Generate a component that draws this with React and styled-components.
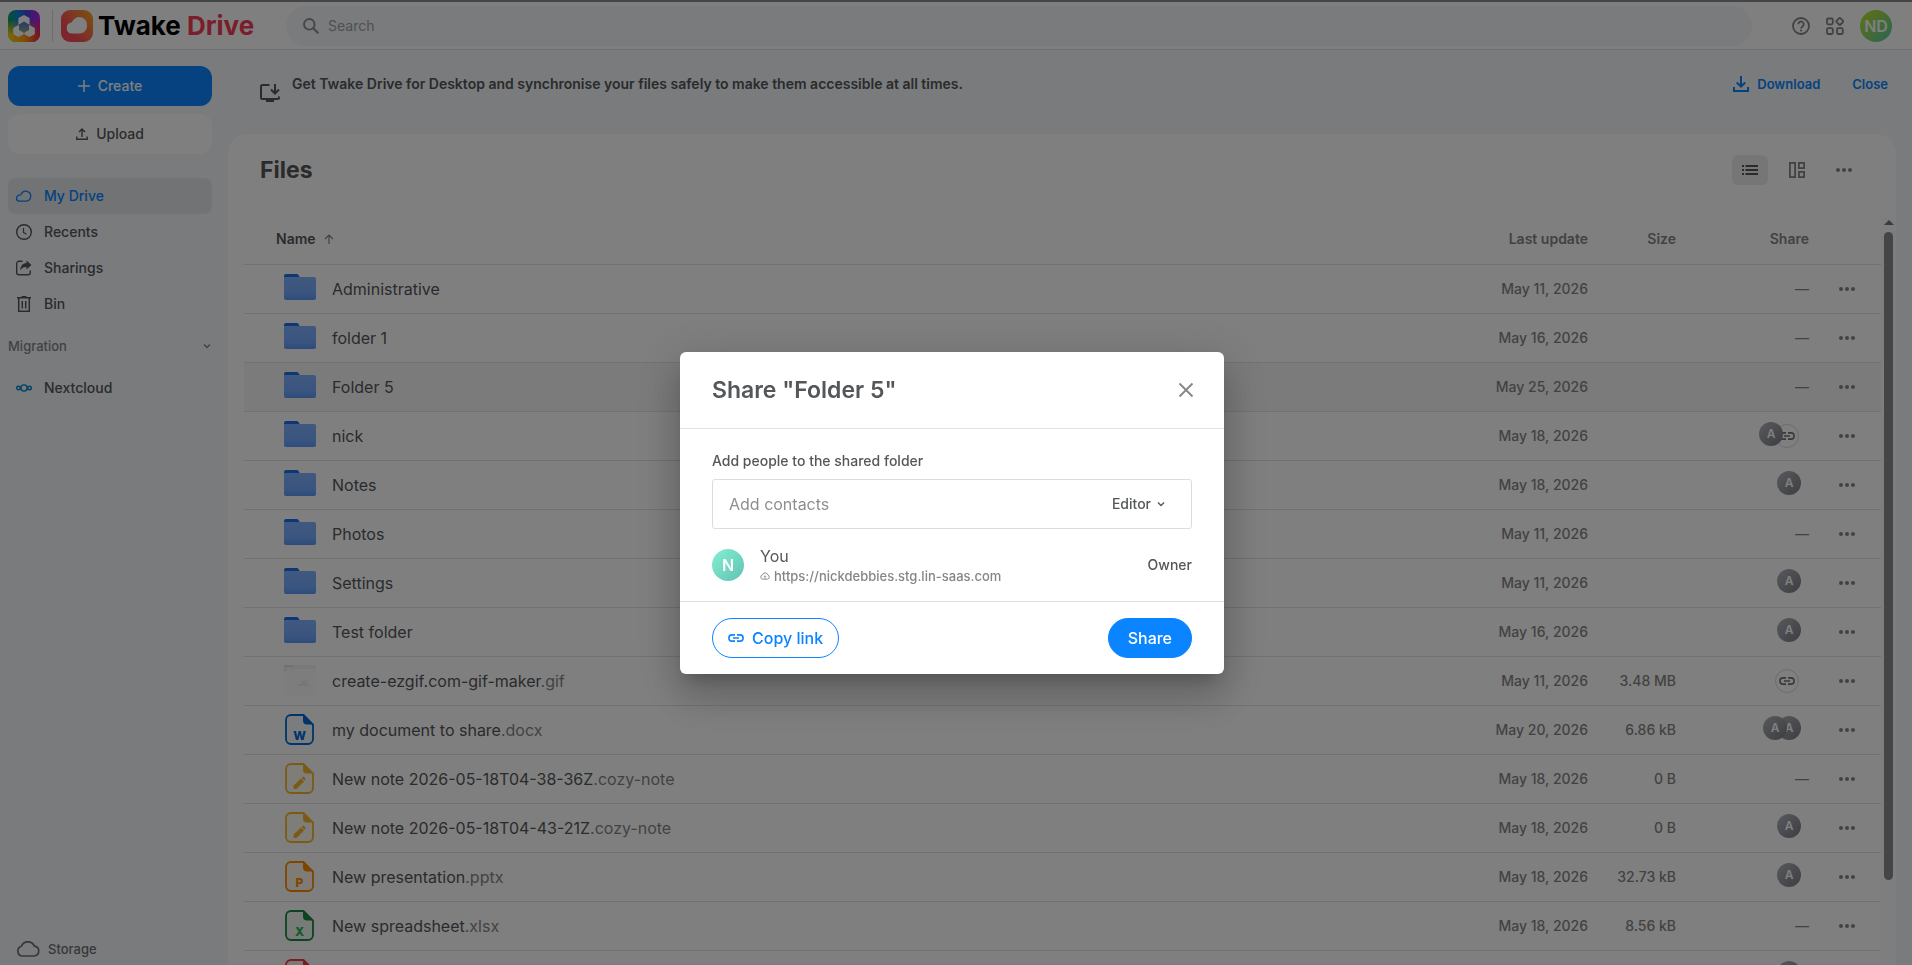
import { useState } from "react";
import styled, { createGlobalStyle, css } from "styled-components";

const COLOR = {
  text: "#545759",
  textSecondary: "#858585",
  primary: "#0a84ff",
  paper: "#ffffff",
  contrast: "#f3f6f9",
  divider: "#e3e3e3",
};

const GlobalStyle = createGlobalStyle`
  *, *::before, *::after {
    box-sizing: border-box;
  }

  html, body, #root {
    height: 100%;
    margin: 0;
  }

  body {
    overflow: hidden;
    background: ${COLOR.contrast};
    color: ${COLOR.text};
    font-family: Inter, "Liberation Sans", sans-serif;
    font-size: 14px;
    line-height: 20px;
  }

  button, input, select {
    font: inherit;
    color: inherit;
  }

  button {
    border: 0;
    padding: 0;
    background: none;
    cursor: pointer;
  }

  a {
    color: inherit;
    text-decoration: none;
  }

  h1, h2, p, ul {
    margin: 0;
    padding: 0;
  }

  svg {
    display: block;
    flex: none;
  }
`;

/* ---------- layout ---------- */

const Page = styled.div`
  display: flex;
  flex-direction: column;
  height: 100vh;
  border-top: 2px solid #8a8a8a;
`;

const TopBar = styled.header`
  display: flex;
  align-items: center;
  flex: none;
  height: 48px;
  padding: 0 20px 0 8px;
  background: ${COLOR.paper};
  border-bottom: 1px solid #dfe3e8;
`;

const Brand = styled.a`
  display: flex;
  align-items: center;
  width: 278px;
  font-size: 26px;
  font-weight: 700;
  line-height: 32px;
  color: #000;
`;

const BrandDivider = styled.span`
  width: 1px;
  height: 32px;
  margin: 0 8px 0 12px;
  background: #d8dbde;
`;

const BrandName = styled.span`
  margin-left: 5px;
  white-space: nowrap;

  span {
    color: #f23c54;
  }
`;

const SearchBox = styled.label`
  display: flex;
  align-items: center;
  flex: 1;
  gap: 8px;
  height: 40px;
  padding: 0 16px;
  border-radius: 20px;
  background: ${COLOR.contrast};
  color: #8d8f91;

  input {
    flex: 1;
    border: 0;
    padding: 0;
    outline: 0;
    background: none;
  }

  input::placeholder {
    color: #9fa1a3;
    opacity: 1;
  }
`;

const TopActions = styled.div`
  display: flex;
  align-items: center;
  gap: 12px;
  margin-left: 38px;
  color: ${COLOR.textSecondary};

  > :last-child {
    margin-left: 2px;
  }
`;

const IconButton = styled.button`
  display: grid;
  place-items: center;
  width: ${({ $width }) => $width || 22}px;
  height: 30px;
  border-radius: 6px;
  color: ${({ $active }) => ($active ? COLOR.text : COLOR.textSecondary)};
  background: ${({ $active }) => ($active ? "#ededed" : "none")};
`;

const Avatar = styled.span`
  display: grid;
  place-items: center;
  flex: none;
  width: ${({ $size }) => $size || 32}px;
  height: ${({ $size }) => $size || 32}px;
  border-radius: 50%;
  background: ${({ $fill }) => $fill};
  color: #fff;
  font-size: ${({ $size }) => ($size === 24 ? 12 : 16)}px;
  font-weight: 600;
`;

const Body = styled.div`
  display: flex;
  flex: 1;
  min-height: 0;
`;

/* ---------- sidebar ---------- */

const Sidebar = styled.aside`
  display: flex;
  flex-direction: column;
  flex: none;
  width: 228px;
  padding: 16px 16px 4px 8px;
`;

const SideButton = styled.button`
  display: flex;
  align-items: center;
  justify-content: center;
  gap: 8px;
  height: 40px;
  margin-bottom: 8px;
  border-radius: 12px;
  font-weight: 500;
  background: ${COLOR.paper};

  ${({ $primary }) =>
    $primary &&
    css`
      background: ${COLOR.primary};
      color: #fff;
    `}
`;

const NavList = styled.ul`
  list-style: none;
  margin-top: 16px;
`;

const NavLink = styled.a`
  display: flex;
  align-items: center;
  gap: 12px;
  height: 36px;
  padding: 0 8px;
  border-radius: 8px;
  font-weight: 500;

  ${({ $active }) =>
    $active &&
    css`
      background: #e4e7ea;
      color: ${COLOR.primary};
    `}
`;

const NavGroup = styled.button`
  display: flex;
  align-items: center;
  justify-content: space-between;
  height: 36px;
  padding-right: 1px;
  margin: 6px 0;
  font-size: 13px;
  font-weight: 500;
  color: ${COLOR.textSecondary};
`;

const Storage = styled.a`
  display: flex;
  align-items: center;
  gap: 8px;
  margin-top: auto;
  padding: 0 8px;
  font-size: 13px;
  font-weight: 500;
  line-height: 24px;
  color: #6f7174;
`;

/* ---------- main ---------- */

const Main = styled.main`
  display: flex;
  flex-direction: column;
  flex: 1;
  min-width: 0;
  padding-right: 16px;
`;

const Banner = styled.section`
  display: flex;
  align-items: flex-start;
  flex: none;
  height: 84px;
  padding: 24px 8px 0 32px;

  > svg {
    margin: 10px 12px 0 0;
  }

  p {
    flex: 1;
    font-weight: 600;
  }
`;

const BannerLink = styled.button`
  display: flex;
  align-items: center;
  gap: 8px;
  margin-left: 32px;
  font-size: 13px;
  font-weight: 600;
  line-height: 20px;
  color: ${COLOR.primary};
`;

const Card = styled.section`
  display: flex;
  flex-direction: column;
  flex: 1;
  min-height: 0;
  padding-left: 16px;
  border-radius: 20px 20px 0 0;
  background: ${COLOR.paper};
`;

const CardHeader = styled.div`
  display: flex;
  align-items: center;
  flex: none;
  height: 72px;
  margin-bottom: 9px;
  padding: 0 34px 0 16px;

  h1 {
    flex: 1;
    font-size: 23px;
    line-height: 32px;
  }
`;

const Toolbar = styled.div`
  display: flex;
  align-items: center;
  gap: 11px;
`;

const Scroller = styled.div`
  display: flex;
  flex: 1;
  min-height: 0;
  overflow: hidden;
`;

const Track = styled.div`
  display: flex;
  flex-direction: column;
  align-items: center;
  flex: none;
  width: 15px;
  padding-top: 5px;
  gap: 7px;
  background: #fcfcfc;
`;

const Thumb = styled.div`
  width: 9px;
  height: 87%;
  border-radius: 5px;
  background: #8b8b8b;
`;

const FileTable = styled.table`
  flex: 1;
  align-self: flex-start;
  border-collapse: collapse;
  table-layout: fixed;

  th, td {
    height: 49px;
    padding: 0;
    border-bottom: 1px solid ${COLOR.divider};
    font-weight: 500;
    text-align: right;
    color: ${COLOR.textSecondary};
  }

  th {
    font-weight: 600;
  }

  th:first-child {
    padding-left: 32px;
    text-align: left;
    color: ${COLOR.text};
  }

  td:first-child {
    padding-left: 40px;
    text-align: left;
  }
`;

const Col = styled.col`
  width: ${({ $width }) => ($width ? `${$width}px` : "auto")};
`;

const FileRow = styled.tr`
  background: ${({ $selected }) => ($selected ? "#f7f7f7" : "none")};
`;

const SortButton = styled.button`
  display: flex;
  align-items: center;
  gap: 8px;
  font-weight: 600;

  svg {
    color: ${COLOR.textSecondary};
  }
`;

const FileName = styled.div`
  display: flex;
  align-items: center;
  gap: 16px;
  font-size: 16px;
  font-weight: 400;
  line-height: 24px;
  color: ${COLOR.text};

  span span {
    color: ${COLOR.textSecondary};
  }
`;

const Shared = styled.div`
  display: flex;
  justify-content: flex-end;
  padding: 0 8px 3px 0;
`;

const Bubble = styled(Avatar)`
  position: relative;
  z-index: ${({ $overlap }) => ($overlap ? 1 : 0)};
  margin-right: -${({ $overlap }) => $overlap}px;
`;

const LinkBubble = styled.span`
  display: grid;
  place-items: center;
  width: 24px;
  height: 24px;
  margin: 2px 2px -2px 0;
  border: 1px solid #d6d8da;
  border-radius: 50%;
  background: ${COLOR.paper};
  color: #717375;
`;

const MoreButton = styled(IconButton)`
  margin-left: auto;
  margin-right: 23px;
`;

/* ---------- share dialog ---------- */

const Backdrop = styled.div`
  position: fixed;
  inset: 0;
  z-index: 10;
  display: grid;
  place-items: center;
  padding: 60px 8px 0 0;
  background: rgba(0, 0, 0, 0.5);
`;

const Dialog = styled.section`
  width: 544px;
  border-radius: 6px;
  background: ${COLOR.paper};
  box-shadow: 0 11px 15px -7px rgba(0, 0, 0, 0.2),
    0 24px 38px 3px rgba(0, 0, 0, 0.14), 0 9px 46px 8px rgba(0, 0, 0, 0.12);
`;

const DialogHeader = styled.header`
  display: flex;
  justify-content: space-between;
  align-items: center;
  height: 77px;
  padding: 0 26px 0 32px;
  border-bottom: 1px solid #e2e2e2;

  h2 {
    font-size: 23px;
    font-weight: 600;
    line-height: 32px;
  }
`;

const DialogBody = styled.div`
  padding: 22px 32px 16px;
`;

const FieldLabel = styled.label`
  display: block;
  margin-bottom: 8px;
  font-weight: 500;
`;

const Field = styled.div`
  display: flex;
  align-items: center;
  height: 50px;
  padding: 0 26px 0 16px;
  border: 1px solid #dcdcdc;
  border-radius: 3px;

  input {
    flex: 1;
    min-width: 0;
    padding: 0;
    border: 0;
    outline: 0;
    font-size: 16px;
    line-height: 24px;
  }

  input::placeholder {
    color: #8f8f8f;
    opacity: 1;
  }

  select {
    padding: 0 6px 0 0;
    border: 0;
    outline: 0;
    appearance: none;
    field-sizing: content;
    background: none;
    font-weight: 500;
  }
`;

const Member = styled.div`
  display: flex;
  align-items: center;
  gap: 16px;
  margin-top: 16px;
  font-weight: 500;
`;

const MemberName = styled.div`
  flex: 1;
  font-size: 16px;
  font-weight: 400;
  line-height: 22px;
`;

const MemberLink = styled.span`
  display: flex;
  align-items: center;
  gap: 4px;
  font-size: 13px;
  font-weight: 500;
  line-height: 18px;
  color: ${COLOR.textSecondary};
`;

const DialogActions = styled.footer`
  display: flex;
  justify-content: space-between;
  padding: 16px 32px;
  border-top: 1px solid #e2e2e2;
`;

const PillButton = styled.button`
  display: flex;
  align-items: center;
  gap: 8px;
  height: 40px;
  padding: 0 ${({ $filled }) => ($filled ? 19 : 15)}px;
  border: 1px solid ${COLOR.primary};
  border-radius: 20px;
  background: ${({ $filled }) => ($filled ? COLOR.primary : COLOR.paper)};
  color: ${({ $filled }) => ($filled ? "#fff" : COLOR.primary)};
  font-size: 16px;
  font-weight: 500;
`;

/* ---------- icons ---------- */

function Icon({ size = 16, height, box = "0 0 16 16", children }) {
  return (
    <svg width={size} height={height || size} viewBox={box} fill="currentColor" aria-hidden="true">
      {children}
    </svg>
  );
}

const stroke = { fill: "none", stroke: "currentColor", strokeWidth: 1.5 };

const HomeLogo = () => (
  <svg width="32" height="32" viewBox="0 0 32 32" aria-hidden="true">
    <defs>
      <linearGradient id="homeTop" x1="0" x2="1" y1="0" y2="0">
        <stop offset="0" stopColor="#10a050" />
        <stop offset="0.3" stopColor="#0a86d8" />
        <stop offset="0.6" stopColor="#4b46e0" />
        <stop offset="1" stopColor="#c51be0" />
      </linearGradient>
      <linearGradient id="homeBottom" x1="0" x2="1" y1="0" y2="0">
        <stop offset="0" stopColor="#ffd400" />
        <stop offset="0.5" stopColor="#ff9d10" />
        <stop offset="1" stopColor="#f0223c" />
      </linearGradient>
      <linearGradient id="homeFade" x1="0" x2="0" y1="0" y2="1">
        <stop offset="0.3" stopColor="#fff" stopOpacity="0" />
        <stop offset="0.8" stopColor="#fff" />
      </linearGradient>
      <linearGradient id="homeCore" x1="0" x2="0" y1="0" y2="1">
        <stop offset="0" stopColor="#4a6fd8" />
        <stop offset="1" stopColor="#8fb07a" />
      </linearGradient>
      <mask id="homeMask">
        <rect width="32" height="32" fill="url(#homeFade)" />
      </mask>
    </defs>
    <rect width="32" height="32" rx="8" fill="url(#homeTop)" />
    <rect width="32" height="32" rx="8" fill="url(#homeBottom)" mask="url(#homeMask)" />
    <g fill="#fff" stroke="#fff" strokeWidth="2" strokeLinejoin="round">
      <path d="M16 6l4.600 2.600v5.400L16 16.500 11.400 14V8.600z" />
      <path d="M10.500 16.200l4.300 2.400v5L10.500 26l-4.300-2.400v-5z" />
      <path d="M21.500 16.200l4.300 2.400v5L21.500 26l-4.300-2.400v-5z" />
    </g>
    <path d="M16 11.500l5 2.900v5.700L16 23l-5-2.900v-5.700z" fill="url(#homeCore)" />
  </svg>
);

const DriveLogo = () => (
  <svg width="32" height="32" viewBox="0 0 32 32" aria-hidden="true">
    <defs>
      <linearGradient id="driveFill" x1="0.100" y1="0.800" x2="0.900" y2="0.100">
        <stop offset="0.200" stopColor="#fb4a5c" />
        <stop offset="1" stopColor="#f89a2a" />
      </linearGradient>
    </defs>
    <rect width="32" height="32" rx="9" fill="url(#driveFill)" />
    <path
      fill="#fff"
      d="M11 23.500a5.500 5.500 0 0 1-.8-10.900 1 1 0 0 0 .8-.5A7.800 7.800 0 0 1 26 16c0 4.200-3.300 7.500-7.500 7.500z"
    />
  </svg>
);

const SearchIcon = () => (
  <Icon size={18}>
    <circle cx="6.500" cy="6.500" r="4.700" {...stroke} strokeWidth="1.700" />
    <path d="M10 10l4.500 4.500" {...stroke} strokeWidth="2" />
  </Icon>
);

const HelpIcon = () => (
  <Icon size={18} box="0 0 18 18">
    <circle cx="9" cy="9" r="8" {...stroke} strokeWidth="1.800" />
    <path d="M6.300 7.300a2.700 2.700 0 1 1 4.300 2.100c-1 .7-1.600 1.100-1.600 2.200" {...stroke} strokeWidth="1.800" />
    <circle cx="9" cy="13.500" r="1.100" />
  </Icon>
);

const AppsIcon = () => (
  <Icon size={18} box="0 0 18 18">
    <g {...stroke} strokeWidth="1.800">
      <rect x="1" y="1.500" width="5.800" height="5.800" rx="1.200" />
      <rect x="1" y="11.200" width="5.800" height="5.800" rx="1.200" />
      <rect x="11" y="11.200" width="5.800" height="5.800" rx="1.200" />
      <rect x="11.100" y="1.700" width="5.400" height="5.400" rx="1" transform="rotate(45 13.800 4.400)" />
    </g>
  </Icon>
);

const PlusIcon = () => (
  <Icon size={12} box="0 0 12 12">
    <path d="M6 0v12M0 6h12" {...stroke} />
  </Icon>
);

const UploadIcon = () => (
  <Icon size={12} box="0 0 12 12">
    <path d="M6 9V1.200M3 4l3-3 3 3M.8 8.500v2.700h10.400V8.500" {...stroke} strokeWidth="1.400" />
  </Icon>
);

const CloudIcon = () => (
  <Icon>
    <path
      d="M3.700 13.200a3 3 0 0 1-.3-6c.8 0 1.300-.2 1.700-.9A5 5 0 1 1 10.200 13.200z"
      {...stroke}
      strokeWidth="1.300"
    />
  </Icon>
);

const ClockIcon = () => (
  <Icon>
    <circle cx="8" cy="8" r="7.300" {...stroke} strokeWidth="1.400" />
    <path d="M7.500 4v4.500l3 1.700" {...stroke} strokeWidth="1.200" />
  </Icon>
);

const SharingsIcon = () => (
  <Icon>
    <path d="M6.500 1.200H3A2.300 2.300 0 0 0 .7 3.500v9A2.300 2.300 0 0 0 3 14.800h9a2.300 2.300 0 0 0 2.300-2.300v-2" {...stroke} strokeWidth="1.400" />
    <path d="M10.500.5l5 4.500-5 4.500V7C7.500 7 5.500 8 4.300 10.500c0-4.500 2.200-7 6.200-7.400z" />
  </Icon>
);

const BinIcon = () => (
  <Icon>
    <path d="M1 1.700h14M5.500.7h5M2.700 2v13.300h10.600V2M6.300 5v7.500M9.700 5v7.500" {...stroke} />
  </Icon>
);

const NextcloudIcon = () => (
  <Icon>
    <g fill="none" stroke="#0082c9" strokeWidth="1.400">
      <circle cx="8" cy="8" r="3.100" />
      <circle cx="2.500" cy="8" r="1.800" />
      <circle cx="13.500" cy="8" r="1.800" />
    </g>
  </Icon>
);

const ChevronIcon = ({ size = 8 }) => (
  <Icon size={size} box="0 0 8 8">
    <path d="M1 2.500l3 3 3-3" {...stroke} strokeWidth="1.400" />
  </Icon>
);

const StorageIcon = () => (
  <Icon size={24} height={16} box="0 0 24 16">
    <path
      d="M6 15a5 5 0 0 1-.6-9.700 7 7 0 0 1 13-.2A5 5 0 0 1 18.500 15z"
      {...stroke}
      strokeWidth="1.700"
      strokeLinejoin="round"
    />
  </Icon>
);

const DesktopIcon = () => (
  <Icon size={20} height={18} box="0 0 20 18">
    <path d="M9.500 1H2.500A1.500 1.500 0 0 0 1 2.500v11c0 .8.600 1.500 1.500 1.500h15c.8 0 1.500-.7 1.500-1.500V12.500" {...stroke} strokeWidth="2" />
    <path d="M15 0v9M11 5.500l4 4 4-4" {...stroke} strokeWidth="2" />
    <path d="M6 15h8v3H6z" />
  </Icon>
);

const DownloadIcon = () => (
  <Icon>
    <path d="M8 0v10M3.800 6.500L8 10.700l4.200-4.200M1 11v4h14v-4" {...stroke} strokeWidth="2" />
  </Icon>
);

const ListIcon = () => (
  <Icon>
    <path d="M0 4h2M3.500 4H16M0 8h2M3.500 8H16M0 12h2M3.500 12H16" {...stroke} strokeWidth="1.800" />
  </Icon>
);

const GridIcon = () => (
  <Icon>
    <g {...stroke} strokeWidth="1.800">
      <rect x="0.900" y="0.900" width="5.200" height="14.200" />
      <rect x="9.900" y="0.900" width="5.200" height="5.200" />
      <rect x="9.900" y="9.900" width="5.200" height="5.200" />
    </g>
  </Icon>
);

const DotsIcon = () => (
  <Icon>
    <circle cx="2" cy="8" r="2" />
    <circle cx="8" cy="8" r="2" />
    <circle cx="14" cy="8" r="2" />
  </Icon>
);

const ArrowUpIcon = () => (
  <Icon size={10} box="0 0 10 10">
    <path d="M5 10V1M1 5l4-4 4 4" {...stroke} strokeWidth="1.200" />
  </Icon>
);

const LinkIcon = ({ size = 16 }) => (
  <Icon size={size} height={size / 2} box="0 0 16 8">
    <path d="M7 .9H4a3.100 3.100 0 0 0 0 6.200h3M9 .9h3a3.100 3.100 0 0 1 0 6.200H9M5 4h6" {...stroke} strokeWidth="1.600" />
  </Icon>
);

const CloseIcon = () => (
  <Icon>
    <path d="M1.500 1.500l13 13M14.500 1.500l-13 13" {...stroke} strokeWidth="1.800" />
  </Icon>
);

const SmallCloudIcon = () => (
  <Icon size={10}>
    <path d="M4 13a3.500 3.500 0 0 1-.2-6.800 4.500 4.500 0 0 1 8.600 0A3.500 3.500 0 0 1 12 13z" {...stroke} />
    <path d="M8 12.500V8M6 9.500l2-2 2 2" {...stroke} strokeWidth="1.200" />
  </Icon>
);

const FolderIcon = () => (
  <svg width="32" height="32" viewBox="0 0 32 32" aria-hidden="true">
    <defs>
      <linearGradient id="folderFill" x1="0" x2="0" y1="0" y2="1">
        <stop offset="0" stopColor="#80b2ff" />
        <stop offset="0.700" stopColor="#74a9ff" />
        <stop offset="1" stopColor="#5b97f7" />
      </linearGradient>
    </defs>
    <path d="M0 3a2 2 0 0 1 2-2h10.500c1 0 1.600.4 2.100 1.200L17 6H0z" fill="#1f6fe8" />
    <path d="M0 4h30a2 2 0 0 1 2 2v19a2 2 0 0 1-2 2H2a2 2 0 0 1-2-2z" fill="url(#folderFill)" />
  </svg>
);

const PreviewIcon = () => (
  <svg width="32" height="32" viewBox="0 0 32 32" aria-hidden="true">
    <path d="M0 0h32v32H0z" fill="#fbfbfb" />
    <path d="M0 0h32v4H0z" fill="#f2f2f2" />
    <path d="M0 1h9M0 5h3" stroke="#d2d2d2" />
    <path d="M14 20h11M18 18h4v-3M17 17h3" stroke="#dfe6e4" fill="none" />
  </svg>
);

const DOCS = {
  word: { line: "#0068d6", page: "#f4f8fd", mark: "W" },
  note: { line: "#f5b52b", page: "#fffaf0" },
  slides: { line: "#fa8c00", page: "#fff8ee", mark: "P" },
  sheet: { line: "#1c8440", page: "#eef9f1", mark: "X", ink: "#2fb457" },
  pdf: { line: "#ee3b46", page: "#fdf1f1" },
};

const MarkText = styled.text`
  font-family: Inter, "Liberation Sans", sans-serif;
  font-size: 12px;
  font-weight: 800;
  text-anchor: middle;
`;

function DocIcon({ type }) {
  const { line, page, mark, ink } = DOCS[type];

  return (
    <svg width="32" height="32" viewBox="0 0 32 32" aria-hidden="true">
      <path
        d="M19.500 1H7a5 5 0 0 0-5 5v19a5 5 0 0 0 5 5h17a5 5 0 0 0 5-5V10.500z"
        fill={page}
        stroke={line}
        strokeWidth="1.800"
      />
      <path d="M19 .5l11 10h-7a4 4 0 0 1-4-4z" fill={line} />
      {mark && (
        <MarkText x="15.500" y="25.500" fill={ink || line}>
          {mark}
        </MarkText>
      )}
      {type === "note" && (
        <g fill={line}>
          <path d="M9.500 26v-3.500l7.500-7 3 3-7.500 7.500z" />
          <path d="M17.600 15l.9-.9c.5-.5 1.200-.5 1.700 0l.9.9c.5.5.5 1.200 0 1.700l-.7.7z" />
        </g>
      )}
    </svg>
  );
}

/* ---------- data ---------- */

const FILES = [
  { name: "Administrative", type: "folder", date: "May 11, 2026" },
  { name: "folder 1", type: "folder", date: "May 16, 2026" },
  { name: "Folder 5", type: "folder", date: "May 25, 2026", selected: true },
  { name: "nick", type: "folder", date: "May 18, 2026", people: 1, link: true },
  { name: "Notes", type: "folder", date: "May 18, 2026", people: 1 },
  { name: "Photos", type: "folder", date: "May 11, 2026" },
  { name: "Settings", type: "folder", date: "May 11, 2026", people: 1 },
  { name: "Test folder", type: "folder", date: "May 16, 2026", people: 1 },
  { name: "create-ezgif.com-gif-maker", ext: ".gif", type: "image", date: "May 11, 2026", size: "3.48 MB", link: true },
  { name: "my document to share", ext: ".docx", type: "word", date: "May 20, 2026", size: "6.86 kB", people: 2 },
  { name: "New note 2026-05-18T04-38-36Z", ext: ".cozy-note", type: "note", date: "May 18, 2026", size: "0 B" },
  { name: "New note 2026-05-18T04-43-21Z", ext: ".cozy-note", type: "note", date: "May 18, 2026", size: "0 B", people: 1 },
  { name: "New presentation", ext: ".pptx", type: "slides", date: "May 18, 2026", size: "32.73 kB", people: 1 },
  { name: "New spreadsheet", ext: ".xlsx", type: "sheet", date: "May 18, 2026", size: "8.56 kB" },
  { name: "", type: "pdf", date: "", people: 1, initial: "" },
];

const NAV = [
  { label: "My Drive", Glyph: CloudIcon, active: true },
  { label: "Recents", Glyph: ClockIcon },
  { label: "Sharings", Glyph: SharingsIcon },
  { label: "Bin", Glyph: BinIcon },
];

const GREY = "linear-gradient(135deg, #b2b4b8, #797c85)";

function FileIcon({ type }) {
  if (type === "folder") return <FolderIcon />;
  if (type === "image") return <PreviewIcon />;
  return <DocIcon type={type} />;
}

function ShareCell({ people = 0, link, initial = "A" }) {
  if (!people && !link) return "—";

  return (
    <Shared>
      {Array.from({ length: people }, (_, i) => (
        <Bubble key={i} $size={24} $fill={GREY} $overlap={i < people - 1 ? 10 : link ? 8 : 0}>
          {initial}
        </Bubble>
      ))}
      {link && (
        <LinkBubble>
          <LinkIcon />
        </LinkBubble>
      )}
    </Shared>
  );
}

function FileList() {
  return (
    <Scroller>
      <FileTable>
        <colgroup>
          <Col />
          <Col $width={160} />
          <Col $width={88} />
          <Col $width={133} />
          <Col $width={72} />
        </colgroup>
        <thead>
          <tr>
            <th>
              <SortButton>
                Name <ArrowUpIcon />
              </SortButton>
            </th>
            <th>Last update</th>
            <th>Size</th>
            <th>Share</th>
            <th aria-label="Actions" />
          </tr>
        </thead>
        <tbody>
          {FILES.map((file) => (
            <FileRow key={file.name} $selected={file.selected}>
              <td>
                <FileName>
                  <FileIcon type={file.type} />
                  <span>
                    {file.name}
                    <span>{file.ext}</span>
                  </span>
                </FileName>
              </td>
              <td>{file.date}</td>
              <td>{file.size}</td>
              <td>
                <ShareCell people={file.people} link={file.link} initial={file.initial} />
              </td>
              <td>
                <MoreButton aria-label="More">
                  <DotsIcon />
                </MoreButton>
              </td>
            </FileRow>
          ))}
        </tbody>
      </FileTable>
      <Track>
        <Icon size={10} height={5} box="0 0 10 5">
          <path d="M0 5l5-5 5 5z" fill="#777" />
        </Icon>
        <Thumb />
      </Track>
    </Scroller>
  );
}

function ShareDialog({ folder, onClose }) {
  const [role, setRole] = useState("Editor");

  return (
    <Backdrop>
      <Dialog role="dialog" aria-labelledby="shareTitle">
        <DialogHeader>
          <h2 id="shareTitle">Share "{folder}"</h2>
          <IconButton $width={24} aria-label="Close" onClick={onClose}>
            <CloseIcon />
          </IconButton>
        </DialogHeader>
        <DialogBody>
          <FieldLabel htmlFor="contacts">Add people to the shared folder</FieldLabel>
          <Field>
            <input id="contacts" type="text" placeholder="Add contacts" />
            <select aria-label="Role" value={role} onChange={(e) => setRole(e.target.value)}>
              <option>Editor</option>
              <option>Viewer</option>
            </select>
            <ChevronIcon />
          </Field>
          <Member>
            <Avatar $fill="linear-gradient(135deg, #86efd2, #5ec2b4)">N</Avatar>
            <MemberName>
              You
              <MemberLink>
                <SmallCloudIcon />
                https://nickdebbies.stg.lin-saas.com
              </MemberLink>
            </MemberName>
            Owner
          </Member>
        </DialogBody>
        <DialogActions>
          <PillButton>
            <LinkIcon />
            Copy link
          </PillButton>
          <PillButton $filled>Share</PillButton>
        </DialogActions>
      </Dialog>
    </Backdrop>
  );
}

function App() {
  const [sharing, setSharing] = useState(true);

  return (
    <>
      <GlobalStyle />
      <Page>
        <TopBar>
          <Brand href="#">
            <HomeLogo />
            <BrandDivider />
            <DriveLogo />
            <BrandName>
              Twake <span>Drive</span>
            </BrandName>
          </Brand>
          <SearchBox>
            <SearchIcon />
            <input type="search" aria-label="Search" placeholder="Search" />
          </SearchBox>
          <TopActions>
            <IconButton aria-label="Help">
              <HelpIcon />
            </IconButton>
            <IconButton aria-label="Apps">
              <AppsIcon />
            </IconButton>
            <Avatar $fill="linear-gradient(135deg, #c4e520, #54c8a8)">ND</Avatar>
          </TopActions>
        </TopBar>
        <Body>
          <Sidebar>
            <SideButton $primary>
              <PlusIcon />
              Create
            </SideButton>
            <SideButton>
              <UploadIcon />
              Upload
            </SideButton>
            <NavList>
              {NAV.map(({ label, Glyph, active }) => (
                <li key={label}>
                  <NavLink href="#" $active={active}>
                    <Glyph />
                    {label}
                  </NavLink>
                </li>
              ))}
            </NavList>
            <NavGroup>
              Migration
              <ChevronIcon />
            </NavGroup>
            <NavLink href="#">
              <NextcloudIcon />
              Nextcloud
            </NavLink>
            <Storage href="#">
              <StorageIcon />
              Storage
            </Storage>
          </Sidebar>
          <Main>
            <Banner>
              <DesktopIcon />
              <p>
                Get Twake Drive for Desktop and synchronise your files safely to make them accessible at all times.
              </p>
              <BannerLink>
                <DownloadIcon />
                Download
              </BannerLink>
              <BannerLink>Close</BannerLink>
            </Banner>
            <Card>
              <CardHeader>
                <h1>Files</h1>
                <Toolbar>
                  <IconButton $width={36} $active aria-label="List view">
                    <ListIcon />
                  </IconButton>
                  <IconButton $width={36} aria-label="Grid view">
                    <GridIcon />
                  </IconButton>
                  <IconButton $width={36} aria-label="More">
                    <DotsIcon />
                  </IconButton>
                </Toolbar>
              </CardHeader>
              <FileList />
            </Card>
          </Main>
        </Body>
      </Page>
      {sharing && <ShareDialog folder="Folder 5" onClose={() => setSharing(false)} />}
    </>
  );
}

export default App;
